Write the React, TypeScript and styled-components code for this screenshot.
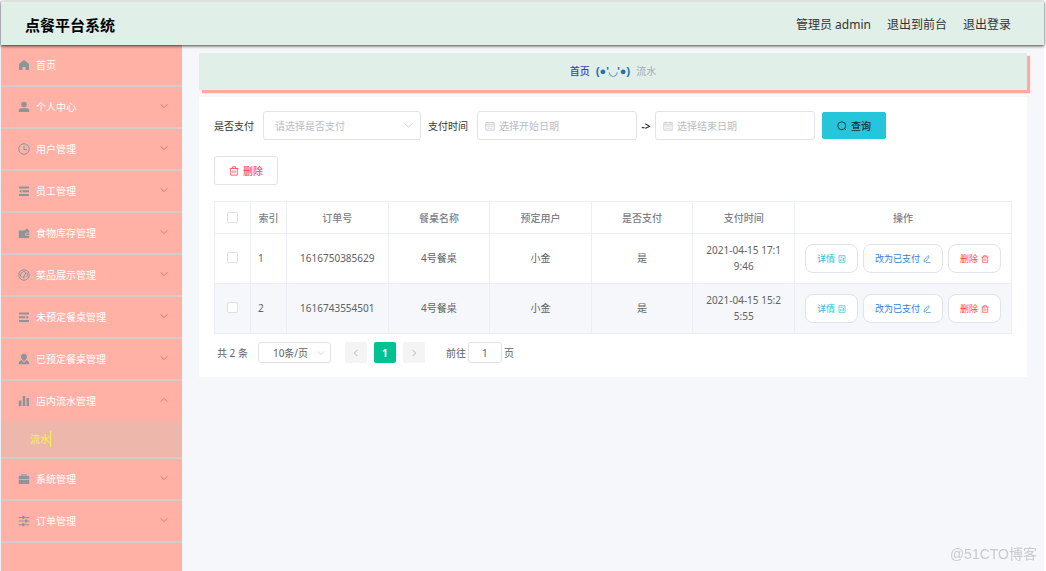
import React from "react";
import styled, { createGlobalStyle, css } from "styled-components";

const Global = createGlobalStyle`
  *, *::before, *::after { box-sizing: border-box; }
  html, body { margin: 0; padding: 0; }
  body {
    background: #f6f7fa;
    color: #606266;
    font-family: "Noto Sans", "Noto Sans CJK SC", sans-serif;
    font-size: 10px;
    line-height: 16px;
  }
  button, input, select { font-family: inherit; font-size: 10px; margin: 0; }
  a { text-decoration: none; color: inherit; }
`;

const Page = styled.div`
  min-height: 100vh;
  display: flex;
  flex-direction: column;
  border: 0 solid #fff;
  border-width: 1px 2px 0 0;
  box-shadow: inset 1px 0 #eceff3;
  padding-left: 1px;
`;

const Header = styled.header`
  position: relative;
  z-index: 2;
  height: 44px;
  border-top: 1px solid #dbe5e0;
  padding: 2px 33px 0 24px;
  display: flex;
  align-items: center;
  justify-content: space-between;
  background: #e0efe8;
  box-shadow: 0 1px 3px rgba(0, 0, 0, 0.75);
`;

const Title = styled.h1`
  margin: 0;
  font-size: 15px;
  line-height: 20px;
  font-weight: 700;
  color: #000;
`;

const HeaderNav = styled.nav`
  display: flex;
  gap: 16px;
  font-size: 12px;
  color: #333;
`;

const Body = styled.div`
  flex: 1;
  display: flex;
`;

const Sidebar = styled.aside`
  flex: 0 0 181px;
  background: #ffb1a6;
`;

const Menu = styled.ul`
  list-style: none;
  margin: 0;
  padding: 0;
`;

const MenuItem = styled.li`
  border-bottom: 2px solid #d6cbc8;
`;

const MenuLink = styled.a`
  height: 40px;
  padding: 0 14px 0 17px;
  display: flex;
  align-items: center;
  gap: 6px;
  color: #fff;
  > span { flex: 1; }
`;

const SubLink = styled.a`
  height: 36px;
  padding-left: 29px;
  display: flex;
  align-items: center;
  background: #edb7ab;
  color: #f6f052;
  > span { border-right: 1px solid #f6f052; }
`;

const Main = styled.main`
  flex: 1;
  min-width: 0;
  padding: 8px 17px 20px 17px;
`;

const Breadcrumb = styled.nav`
  height: 37px;
  padding-bottom: 2px;
  display: flex;
  align-items: center;
  justify-content: center;
  gap: 6px;
  background: #e0efe8;
  box-shadow: 3px 3px 1px #ffaa9e;
  color: #a2adba;
  a { color: #3b3bdc; font-weight: 500; }
`;

const Face = styled.b`
  color: #2470b3;
  font-family: "Liberation Sans", "DejaVu Sans", sans-serif;
  font-size: 11px;
`;

const Card = styled.section`
  margin-top: 7px;
  padding: 14px 15px;
  background: #fff;
`;

const FilterRow = styled.form`
  display: flex;
  align-items: center;
`;

const Label = styled.label`
  flex: none;
  margin-right: 9px;
  color: #333;
`;

const Field = styled.div<{ $end?: number; $width?: number }>`
  flex: 0 1 ${(p) => p.$width ?? 160}px;
  height: 29px;
  margin-right: ${(p) => p.$end ?? 0}px;
  padding: 0 7px;
  display: flex;
  align-items: center;
  gap: 4px;
  border: 1px solid #e0e3e9;
  border-radius: 3px;
  background: #fff;
`;

const plain = css`
  flex: 1;
  min-width: 0;
  width: 100%;
  padding: 0;
  border: 0;
  outline: 0;
  background: transparent;
  color: #606266;
`;

const TextInput = styled.input`
  ${plain}
  &::placeholder { color: #b9bdc6; opacity: 1; }
`;

const Select = styled.select<{ $muted?: boolean }>`
  ${plain}
  appearance: none;
  padding-left: ${(p) => (p.$muted ? 4 : 6)}px;
  color: ${(p) => (p.$muted ? "#b9bdc6" : "#606266")};
`;

const Arrow = styled.span`
  width: 18px;
  text-align: center;
  font-weight: 700;
  color: #333;
`;

const Button = styled.button<{ $kind: "primary" | "danger" }>`
  height: ${(p) => (p.$kind === "primary" ? 27 : 29)}px;
  width: 64px;
  padding: 0;
  display: flex;
  align-items: center;
  justify-content: center;
  gap: 4px;
  border: 1px solid ${(p) => (p.$kind === "primary" ? "#25c5da" : "#e0e3e9")};
  border-radius: ${(p) => (p.$kind === "primary" ? 2 : 3)}px;
  background: ${(p) => (p.$kind === "primary" ? "#25c5da" : "#fff")};
  color: ${(p) => (p.$kind === "primary" ? "#1b2a33" : "#ff4d55")};
  font-weight: 500;
`;

const Toolbar = styled.div`
  margin: 16px 0;
`;

const Table = styled.table`
  width: 100%;
  table-layout: fixed;
  border-collapse: collapse;
  th, td {
    border: 1px solid #ebeef5;
    padding: 0 10px;
    text-align: center;
    vertical-align: middle;
    word-break: break-all;
  }
  th { height: 32px; padding: 0 4px; font-weight: 500; color: #7d8087; }
  td { height: 50px; }
  td:not(:last-child) { padding-bottom: 2px; }
  td:nth-child(2) { text-align: left; padding-left: 7px; }
  tbody tr:nth-child(even) { background: #f5f7fa; }
`;

const Col = styled.col<{ $w?: number }>`
  width: ${(p) => (p.$w ? `${p.$w}px` : "auto")};
`;

const Check = styled.input`
  appearance: none;
  display: block;
  width: 11px;
  height: 11px;
  margin: 0 auto;
  border: 1px solid #dcdfe6;
  border-radius: 2px;
  background: #fff;
`;

const Actions = styled.div`
  display: flex;
  justify-content: center;
  gap: 5px;
`;

const ActionButton = styled.button<{ $tone: string }>`
  height: 29px;
  padding: 0 11px;
  display: flex;
  align-items: center;
  gap: 3px;
  border: 1px solid #e0e3e9;
  border-radius: 8px;
  background: #fff;
  color: ${(p) => p.$tone};
  font-size: 9px;
  white-space: nowrap;
`;

const Pagination = styled.div`
  margin-top: 8px;
  padding: 0 3px;
  display: flex;
  align-items: center;
`;

const PageSize = styled.div`
  width: 73px;
  height: 21px;
  margin: 0 14px 0 10px;
  padding: 0 5px 0 8px;
  display: flex;
  align-items: center;
  border: 1px solid #e0e3e9;
  border-radius: 3px;
`;

const PageButton = styled.button<{ $active?: boolean }>`
  width: 22px;
  height: 21px;
  margin-right: 7px;
  padding: 0;
  display: flex;
  align-items: center;
  justify-content: center;
  border: 0;
  border-radius: 2px;
  background: ${(p) => (p.$active ? "#00c292" : "#f4f4f5")};
  color: ${(p) => (p.$active ? "#fff" : "#b4b8c0")};
  font-weight: 700;
`;

const Jump = styled.label`
  margin-left: 14px;
  display: flex;
  align-items: center;
  gap: 2px;
`;

const JumpInput = styled.input`
  width: 34px;
  height: 21px;
  padding: 0;
  border: 1px solid #e0e3e9;
  border-radius: 3px;
  text-align: center;
  color: #606266;
`;

const Watermark = styled.div`
  position: fixed;
  right: 9px;
  bottom: 7px;
  font-family: "Liberation Sans", "Noto Sans CJK SC", sans-serif;
  font-size: 14px;
  line-height: 20px;
  color: #c8cacd;
`;

const Svg = styled.svg<{ $size: number }>`
  flex: none;
  display: block;
  width: ${(p) => p.$size}px;
  height: ${(p) => p.$size}px;
`;

type IconName =
  | "home" | "user" | "clock" | "fold" | "wallet" | "gauge" | "unfold" | "custom"
  | "bars" | "case" | "sliders" | "down" | "up" | "left" | "right" | "trash"
  | "calendar" | "search" | "doc" | "edit";

/* Filled glyphs take the current colour; outlined ones are stroked with it. */
const filled: Partial<Record<IconName, React.ReactNode>> = {
  home: <path d="M12 2 22 10v12h-7v-6H9v6H2V10z" />,
  user: <path d="M12 1.500a5.600 5.600 0 1 1 0 11.200a5.600 5.600 0 0 1 0-11.200zM1.500 22v-3c0-3 2-4.500 5-4.500h11c3 0 5 1.500 5 4.500v3z" />,
  fold: <path d="M2 3h20v4H2zM2 18h20v4H2zM9 10.500h13v4H9zM2 12.500l5-3.500v7z" />,
  unfold: <path d="M2 3h20v4H2zM2 18h20v4H2zM2 10.500h13v4H2zM22 12.500l-5-3.500v7z" />,
  wallet: <path fillRule="evenodd" d="M1.500 7H13l5.500-4.500L21 7h1.500v4.500H17a3 3 0 0 0 0 6h5.500V22h-21zM17 13h5.500v3H17a1.500 1.500 0 0 1 0-3z" />,
  custom: <path d="M12 1.500c3.500 0 6 2.500 6 6 0 2.700-1.500 5-3 6.200L12 17l-3-3.300c-1.500-1.200-3-3.500-3-6.200 0-3.500 2.500-6 6-6zM7 14l5 5 5-5c3.500 1 5.500 3.500 5.500 8.500h-21C1.500 17.500 3.500 15 7 14z" />,
  bars: <path d="M1.500 11h5.500v11H1.500zM9.500 2h5v20h-5zM17 6h5v16h-5z" />,
  case: <path fillRule="evenodd" d="M7 6V2.500h10V6h5.500v6h-21V6zM9 6h6V4.500H9zM1.500 13.500h21V22h-21z" />,
  sliders: <path d="M1.500 4h7V2h4v2h10v2h-10v2h-4V6h-7zM1.500 11h13V9h4v2h4v2h-4v2h-4v-2h-13zM1.500 18.500h7v-2h4v2h10v2h-10v2h-4v-2h-7z" />,
};

const outlined: Partial<Record<IconName, React.ReactNode>> = {
  clock: <><circle cx="12" cy="12" r="10.500" /><path d="M12 6v7h6" /></>,
  gauge: <><circle cx="12" cy="12" r="10.500" /><path d="M6.500 16.500a7 7 0 1 1 11 0M15.500 8 12 15" /><circle cx="11.500" cy="16.500" r="1.500" /></>,
  down: <path d="m2 7 10 10L22 7" />,
  up: <path d="m2 17 10-10 10 10" />,
  left: <path d="m16 3-9 9 9 9" />,
  right: <path d="m8 3 9 9-9 9" />,
  trash: <path d="M1.500 6h21M8 6V2h8v4M4 6v16h16V6M9.500 10.500v7M14.500 10.500v7" />,
  calendar: <path d="M2 4h20v18H2zM2 9h20M7 1.500V6M17 1.500V6M6 13h3M10.500 13h3M15 13h3M6 17.500h3M10.500 17.500h3M15 17.500h3" />,
  search: <><circle cx="11.500" cy="11.500" r="9.500" /><path d="m18.500 18.500 3.500 3.500" /></>,
  doc: <path d="M3 2h18v20H3zM7 7h7M7.500 18v-5M12 18v-7M16.500 18V9" />,
  edit: <path d="M15 2l4 3L9 18l-6 3 1-7zM9 22.500h14" />,
};

function Icon({ name, size = 12, width = 2 }: { name: IconName; size?: number; width?: number }) {
  return filled[name] ? (
    <Svg $size={size} viewBox="0 0 24 24" fill="currentColor" aria-hidden="true">{filled[name]}</Svg>
  ) : (
    <Svg $size={size} viewBox="0 0 24 24" fill="none" stroke="currentColor" strokeWidth={width} aria-hidden="true">
      {outlined[name]}
    </Svg>
  );
}

const MenuIcon = styled.i`
  color: #8f9499;
`;

const MenuArrow = styled.i`
  padding-bottom: 2px;
  color: #f56c6c;
`;

const FieldIcon = styled.i`
  color: #c0c4cc;
`;

const menu: { label: string; icon: IconName; open?: boolean; leaf?: boolean }[] = [
  { label: "首页", icon: "home", leaf: true },
  { label: "个人中心", icon: "user" },
  { label: "用户管理", icon: "clock" },
  { label: "员工管理", icon: "fold" },
  { label: "食物库存管理", icon: "wallet" },
  { label: "菜品展示管理", icon: "gauge" },
  { label: "未预定餐桌管理", icon: "unfold" },
  { label: "已预定餐桌管理", icon: "custom" },
  { label: "店内流水管理", icon: "bars", open: true },
  { label: "系统管理", icon: "case" },
  { label: "订单管理", icon: "sliders" },
];

const columns = ["订单号", "餐桌名称", "预定用户", "是否支付", "支付时间"];

const orders = [
  ["1616750385629", "4号餐桌", "小金", "是", "2021-04-15 17:19:46"],
  ["1616743554501", "4号餐桌", "小金", "是", "2021-04-15 15:25:55"],
];

export default function App() {
  return (
    <>
      <Global />
      <Page>
        <Header>
          <Title>点餐平台系统</Title>
          <HeaderNav>
            <span>管理员 admin</span>
            <a href="#front">退出到前台</a>
            <a href="#logout">退出登录</a>
          </HeaderNav>
        </Header>
        <Body>
          <Sidebar>
            <Menu>
              {menu.map((m) => (
                <MenuItem key={m.label}>
                  <MenuLink href="#menu">
                    <MenuIcon><Icon name={m.icon} /></MenuIcon>
                    <span>{m.label}</span>
                    {!m.leaf && (
                      <MenuArrow><Icon name={m.open ? "up" : "down"} size={8} width={3} /></MenuArrow>
                    )}
                  </MenuLink>
                  {m.open && <SubLink href="#flow"><span>流水</span></SubLink>}
                </MenuItem>
              ))}
            </Menu>
          </Sidebar>
          <Main>
            <Breadcrumb>
              <a href="#home">首页</a>
              <Face>(●'◡'●)</Face>
              <span>流水</span>
            </Breadcrumb>
            <Card>
              <FilterRow>
                <Label htmlFor="paid">是否支付</Label>
                <Field $end={7} $width={158}>
                  <Select id="paid" $muted defaultValue="">
                    <option value="">请选择是否支付</option>
                    <option value="1">是</option>
                    <option value="0">否</option>
                  </Select>
                  <FieldIcon><Icon name="down" size={9} /></FieldIcon>
                </Field>
                <Label htmlFor="start">支付时间</Label>
                <Field>
                  <FieldIcon><Icon name="calendar" size={10} /></FieldIcon>
                  <TextInput id="start" placeholder="选择开始日期" />
                </Field>
                <Arrow>-&gt;</Arrow>
                <Field $end={7}>
                  <FieldIcon><Icon name="calendar" size={10} /></FieldIcon>
                  <TextInput id="end" aria-label="结束日期" placeholder="选择结束日期" />
                </Field>
                <Button type="button" $kind="primary"><Icon name="search" size={10} />查询</Button>
              </FilterRow>
              <Toolbar>
                <Button type="button" $kind="danger"><Icon name="trash" size={10} />删除</Button>
              </Toolbar>
              <Table>
                <colgroup>
                  <Col $w={36} />
                  <Col $w={36} />
                  {columns.map((c) => <Col key={c} />)}
                  <Col $w={217} />
                </colgroup>
                <thead>
                  <tr>
                    <th><Check type="checkbox" aria-label="全选" /></th>
                    <th>索引</th>
                    {columns.map((c) => <th key={c}>{c}</th>)}
                    <th>操作</th>
                  </tr>
                </thead>
                <tbody>
                  {orders.map((row, i) => (
                    <tr key={row[0]}>
                      <td><Check type="checkbox" aria-label={`选择 ${i + 1}`} /></td>
                      <td>{i + 1}</td>
                      {row.map((v, k) => <td key={k}>{v}</td>)}
                      <td>
                        <Actions>
                          <ActionButton type="button" $tone="#2bbcd2">详情<Icon name="doc" size={8} /></ActionButton>
                          <ActionButton type="button" $tone="#2f80e0">改为已支付<Icon name="edit" size={8} /></ActionButton>
                          <ActionButton type="button" $tone="#ff4048">删除<Icon name="trash" size={8} /></ActionButton>
                        </Actions>
                      </td>
                    </tr>
                  ))}
                </tbody>
              </Table>
              <Pagination>
                <span>共 2 条</span>
                <PageSize>
                  <Select aria-label="每页条数" defaultValue="10">
                    <option value="10">10条/页</option>
                    <option value="20">20条/页</option>
                  </Select>
                  <FieldIcon><Icon name="down" size={8} /></FieldIcon>
                </PageSize>
                <PageButton type="button" aria-label="上一页"><Icon name="left" size={8} width={3} /></PageButton>
                <PageButton type="button" $active>1</PageButton>
                <PageButton type="button" aria-label="下一页"><Icon name="right" size={8} width={3} /></PageButton>
                <Jump>
                  前往
                  <JumpInput defaultValue="1" />
                  页
                </Jump>
              </Pagination>
            </Card>
          </Main>
        </Body>
        <Watermark>@51CTO博客</Watermark>
      </Page>
    </>
  );
}
